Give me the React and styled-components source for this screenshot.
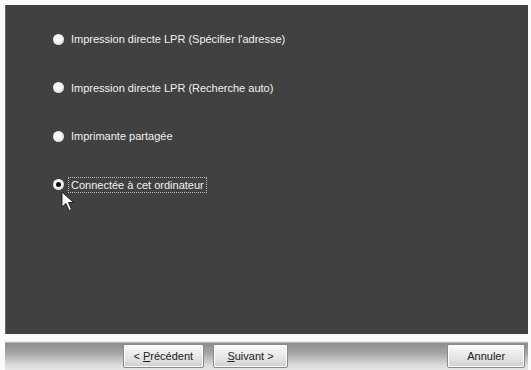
import React from 'react';
import styled, { createGlobalStyle } from 'styled-components';

const Global = createGlobalStyle`
  html, body {
    margin: 0;
    padding: 0;
    background: #fdfdfd;
  }
  body {
    font-family: "Liberation Sans", Arial, sans-serif;
  }
`;

const S = {
  Window: styled.div`
    width: 531px;
    height: 370px;
    display: flex;
    flex-direction: column;
    padding: 5px 3px 0 5px;
    box-sizing: border-box;
    background: #fbfbfb;
  `,
  Panel: styled.div`
    height: 329px;
    background: #414141;
    border-left: 1px solid #6a6a6a;
    display: flex;
    flex-direction: column;
    gap: 30.6px;
    padding: 25px 0 0 47px;
    box-sizing: border-box;
    position: relative;
  `,
  Option: styled.label`
    display: flex;
    align-items: center;
    gap: 4px;
    height: 18px;
    color: #f2f2f2;
    font-size: 11px;
    position: relative;
  `,
  Radio: styled.span`
    width: 11px;
    height: 11px;
    border-radius: 50%;
    background: radial-gradient(circle at 45% 40%, #ffffff 0%, #f4f4f4 45%, #c8c8c8 100%);
    display: flex;
    align-items: center;
    justify-content: center;
    flex: none;
    &::after {
      content: '';
      width: 5px;
      height: 5px;
      border-radius: 50%;
      background: #111;
      display: ${(p) => (p.checked ? 'block' : 'none')};
    }
  `,
  Text: styled.span`
    padding: 1px 2px;
    border: 1px dotted ${(p) => (p.focus ? '#bdbdbd' : 'transparent')};
    white-space: nowrap;
  `,
  Cursor: styled.svg`
    position: absolute;
    left: 8px;
    top: 15px;
  `,
  Bar: styled.div`
    margin-top: 7px;
    flex: 1;
    background: linear-gradient(#e8e8e8 0px, #e8e8e8 1px, #8c8c8c 2px, #a5a5a5 12px, #dcdcdc 24px, #e6e6e6 29px);
    display: flex;
    align-items: center;
    padding: 0 3px 0 118px;
    gap: 9px;
    box-sizing: border-box;
  `,
  Button: styled.button`
    width: ${(p) => p.w}px;
    height: 24px;
    margin-left: ${(p) => p.ml || 0}px;
    border: 1px solid #8a8a8a;
    border-radius: 2px;
    background: linear-gradient(#fafafa, #e4e4e4 60%, #cfcfcf);
    font-family: "Liberation Sans", Arial, sans-serif;
    font-size: 11px;
    color: #202020;
    padding: 0;
    box-shadow: inset 0 0 0 1px #ffffff;
    u { text-decoration: underline; }
  `,
};

function Cursor() {
  return (
    <S.Cursor width="16" height="22" viewBox="0 0 16 22">
      <path d="M1 1 L1 16 L5 12.5 L8 19.5 L10.5 18.5 L7.5 11.5 L12.5 11.5 Z" fill="#ffffff" stroke="#222" strokeWidth="1" />
    </S.Cursor>
  );
}

const options = [
  'Impression directe LPR (Spécifier l\'adresse)',
  'Impression directe LPR (Recherche auto)',
  'Imprimante partagée',
  'Connectée à cet ordinateur',
];

export default function App() {
  return (
    <>
      <Global />
      <S.Window>
        <S.Panel>
          {options.map((o, i) => (
            <S.Option key={o}>
              <S.Radio checked={i === 3} />
              <S.Text focus={i === 3}>{o}</S.Text>
              {i === 3 && <Cursor />}
            </S.Option>
          ))}
        </S.Panel>
        <S.Bar>
          <S.Button w={81}>&lt; <u>P</u>récédent</S.Button>
          <S.Button w={76}><u>S</u>uivant &gt;</S.Button>
          <S.Button w={78} ml={150}>Annuler</S.Button>
        </S.Bar>
      </S.Window>
    </>
  );
}
